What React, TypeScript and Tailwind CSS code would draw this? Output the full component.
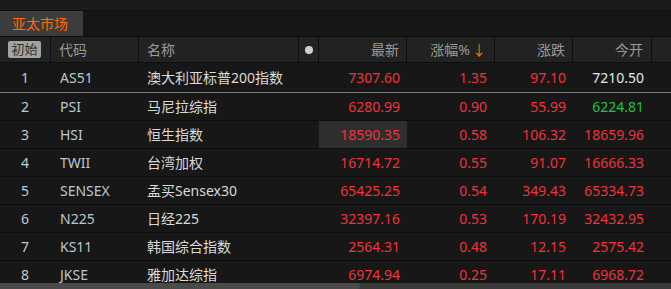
import React from "react";

type Row = {
  i: number;
  code: string;
  name: string;
  last: string;
  pct: string;
  chg: string;
  open: string;
  openColor: string;
};

const rows: Row[] = [
  { i: 1, code: "AS51", name: "澳大利亚标普200指数", last: "7307.60", pct: "1.35", chg: "97.10", open: "7210.50", openColor: "text-[#e6e6e6]" },
  { i: 2, code: "PSI", name: "马尼拉综指", last: "6280.99", pct: "0.90", chg: "55.99", open: "6224.81", openColor: "text-[#1fc24a]" },
  { i: 3, code: "HSI", name: "恒生指数", last: "18590.35", pct: "0.58", chg: "106.32", open: "18659.96", openColor: "text-[#f0323c]" },
  { i: 4, code: "TWII", name: "台湾加权", last: "16714.72", pct: "0.55", chg: "91.07", open: "16666.33", openColor: "text-[#f0323c]" },
  { i: 5, code: "SENSEX", name: "孟买Sensex30", last: "65425.25", pct: "0.54", chg: "349.43", open: "65334.73", openColor: "text-[#f0323c]" },
  { i: 6, code: "N225", name: "日经225", last: "32397.16", pct: "0.53", chg: "170.19", open: "32432.95", openColor: "text-[#f0323c]" },
  { i: 7, code: "KS11", name: "韩国综合指数", last: "2564.31", pct: "0.48", chg: "12.15", open: "2575.42", openColor: "text-[#f0323c]" },
  { i: 8, code: "JKSE", name: "雅加达综指", last: "6974.94", pct: "0.25", chg: "17.11", open: "6968.72", openColor: "text-[#f0323c]" },
];

const font = { fontFamily: '"Noto Sans", "Noto Sans CJK SC", sans-serif' };

export default function App() {
  return (
    <div className="w-[671px] h-[289px] bg-[#171717] flex flex-col overflow-hidden text-[14px]" style={font}>
      <div className="h-[10px] bg-[#1b1b1b] shrink-0" />
      <div className="h-[1px] bg-[#0e0e0e] shrink-0" />
      <div className="h-[25px] bg-[#161616] flex shrink-0">
        <div className="w-[83px] bg-[#3c3c3c] flex items-center pl-[12px] text-[#ff6a0a] leading-none">亚太市场</div>
      </div>
      <div className="h-[1px] bg-[#0e0e0e] shrink-0" />
      <div className="h-[26px] bg-[#222222] border-b border-[#0e0e0e] flex items-stretch shrink-0 text-[#9a9a9a] leading-none">
        <div className="w-[51px] flex items-center pl-[8px] border-r border-[#0e0e0e]">
          <span className="bg-[#a3a3a3] text-[#2e2e2e] rounded-[2px] h-[17px] w-[33px] flex items-center justify-center text-[13px]">初始</span>
        </div>
        <div className="w-[88px] flex items-center pl-[8px] border-r border-[#0e0e0e]">代码</div>
        <div className="w-[160px] flex items-center pl-[8px] border-r border-[#0e0e0e]">名称</div>
        <div className="w-[20px] flex items-center justify-center border-r border-[#0e0e0e]">
          <span className="w-[8px] h-[8px] rounded-full bg-[#cfcfcf]" />
        </div>
        <div className="w-[88px] flex items-center justify-end pr-[7px] border-r border-[#0e0e0e]">最新</div>
        <div className="w-[88px] flex items-center justify-end pr-[8px] border-r border-[#0e0e0e]">
          涨幅%<span className="text-[#ff6a0a] ml-[2px]">↓</span>
        </div>
        <div className="w-[78px] flex items-center justify-end pr-[7px] border-r border-[#0e0e0e]">涨跌</div>
        <div className="w-[79px] flex items-center justify-end pr-[8px] border-r border-[#0e0e0e]">今开</div>
        <div className="flex-1" />
      </div>
      <div className="flex-1 overflow-hidden">
        {rows.map((r) => (
          <div
            key={r.i}
            className={
              r.i === 1
                ? "h-[30px] border-b border-[#7a7a7a] flex items-stretch leading-none"
                : "h-[28px] border-b border-[#0c0c0c] flex items-stretch leading-none"
            }
          >
            <div className="w-[51px] flex items-center pl-[21px] text-[#c2cad2]">{r.i}</div>
            <div className="w-[88px] flex items-center pl-[9px] text-[#bcc6d0]">{r.code}</div>
            <div className="w-[160px] flex items-center pl-[8px] text-[#dadada]">{r.name}</div>
            <div className="w-[20px]" />
            <div
              className={
                r.i === 3
                  ? "w-[88px] flex items-center justify-end pr-[7px] text-[#f0323c] bg-[#2e2e2e]"
                  : "w-[88px] flex items-center justify-end pr-[7px] text-[#f0323c]"
              }
            >
              {r.last}
            </div>
            <div className="w-[88px] flex items-center justify-end pr-[8px] text-[#f0323c]">{r.pct}</div>
            <div className="w-[78px] flex items-center justify-end pr-[7px] text-[#f0323c]">{r.chg}</div>
            <div className={`w-[79px] flex items-center justify-end pr-[8px] ${r.openColor}`}>{r.open}</div>
            <div className="flex-1" />
          </div>
        ))}
      </div>
      <div className="h-[6px] bg-[#3a3a3a] shrink-0 flex">
        <div className="w-[360px] bg-[#4a4a4a] rounded-r-[3px]" />
      </div>
    </div>
  );
}
